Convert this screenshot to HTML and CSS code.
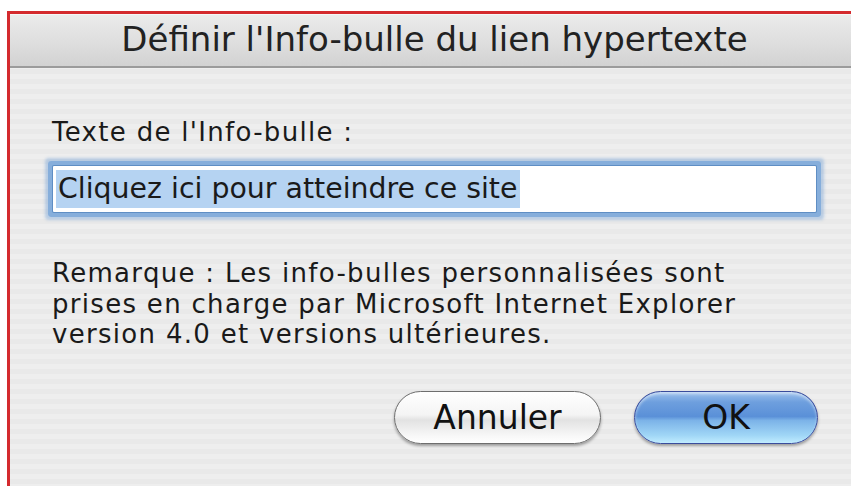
FILE: index.html
```html
<!DOCTYPE html>
<html lang="fr">
<head>
<meta charset="utf-8">
<title>Définir l'Info-bulle du lien hypertexte</title>
<link rel="stylesheet" href="styles.css">
</head>
<body>
<div class="dialog">
  <div class="titlebar">Définir l'Info-bulle du lien hypertexte</div>
  <div class="content">
    <div class="label">Texte de l'Info-bulle :</div>
    <div class="field"><span class="selected">Cliquez ici pour atteindre ce site</span></div>
    <p class="note">Remarque : Les info-bulles personnalisées sont<br>prises en charge par Microsoft Internet Explorer<br>version 4.0 et versions ultérieures.</p>
    <div class="buttons">
      <button class="btn cancel">Annuler</button>
      <button class="btn ok">OK</button>
    </div>
  </div>
</div>
</body>
</html>
```

FILE: styles.css
```css
html, body {
  margin: 0;
  padding: 0;
  background: #ffffff;
  height: 100%;
  overflow: hidden;
}

body {
  font-family: "DejaVu Sans", "Liberation Sans", sans-serif;
  color: #1a1a1a;
}

.dialog {
  margin-top: 11px;
  margin-left: 7px;
  border-top: 3px solid #d42a2e;
  border-left: 3px solid #d42a2e;
  height: calc(100% - 14px);
  background:
    repeating-linear-gradient(180deg, #eeeeee 0px, #eeeeee 5px, #e9e9e9 5px, #e9e9e9 10px);
}

.titlebar {
  height: 51px;
  border-top: 1px solid #f6f6f6;
  border-bottom: 2px solid #9b9b9b;
  background: linear-gradient(180deg, #ebebeb 0%, #dedede 55%, #d2d2d2 100%);
  text-align: center;
  font-size: 34px;
  line-height: 48px;
  color: #222;
  padding-left: 8px;
  white-space: nowrap;
}

.content {
  padding: 49px 0 0 42px;
}

.label {
  font-size: 26px;
  letter-spacing: 1.3px;
  line-height: 31px;
}

.field {
  margin-top: 18px;
  width: 763px;
  height: 46px;
  background: #ffffff;
  border-radius: 1px;
  box-shadow: 0 0 0 1px #5f8ec4, 0 0 0 5px #86aedb, 0 0 3px 8px rgba(120, 165, 215, 0.45);
  display: flex;
  align-items: center;
  padding-left: 3px;
  box-sizing: border-box;
  margin-left: 1px;
}

.selected {
  background: #b5d3f2;
  font-size: 28.4px;
  line-height: 38px;
  padding: 0 3px 0 2px;
  white-space: nowrap;
}

.note {
  margin: 46px 0 0 0;
  font-size: 26px;
  letter-spacing: 1.3px;
  line-height: 30.5px;
  white-space: nowrap;
}

.buttons {
  display: flex;
  gap: 33px;
  margin-top: 41px;
  margin-left: 342px;
}

.btn {
  font-family: inherit;
  font-size: 33px;
  height: 53px;
  border-radius: 27px;
  color: #111;
  padding: 0;
  cursor: default;
}

.cancel {
  width: 207px;
  border: 1.5px solid #6e6e6e;
  background: linear-gradient(180deg, #ffffff 0%, #f4f4f4 45%, #e2e2e2 55%, #f7f7f7 85%, #ffffff 100%);
  box-shadow: 0 2px 3px rgba(0, 0, 0, 0.35);
}

.ok {
  width: 184px;
  border: 1.5px solid #3a4c9c;
  background: linear-gradient(180deg, #9cc0ec 0%, #6e9fde 20%, #5a90d8 48%, #7cb3e8 56%, #a0d6f6 85%, #c0ecff 100%);
  box-shadow: 0 2px 3px rgba(0, 0, 0, 0.35), inset 0 2px 3px rgba(255, 255, 255, 0.5);
}
```
